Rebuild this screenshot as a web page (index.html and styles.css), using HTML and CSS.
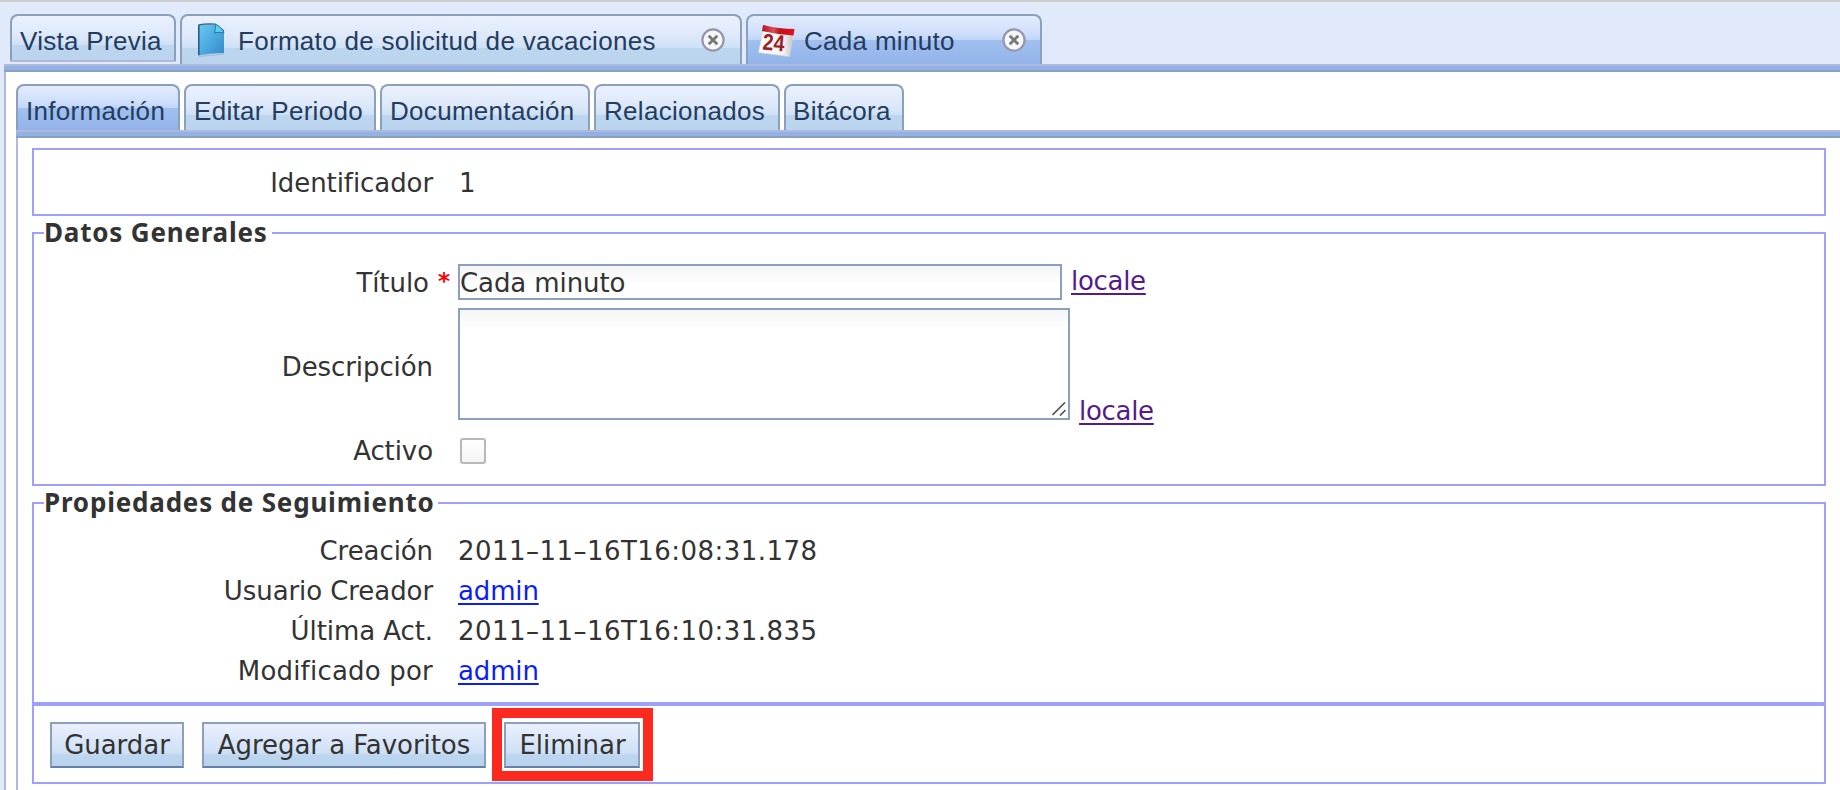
FILE: index.html
```
<!DOCTYPE html>
<html lang="es">
<head>
<meta charset="utf-8">
<title>Cada minuto</title>
<link rel="stylesheet" href="styles.css">
</head>
<body>
<div class="app">
  <nav class="tabs tabs-outer">
    <div class="tab tab-preview"><span class="t-vista">Vista Previa</span></div>
    <div class="tab tab-format">
      <svg class="ico-doc" width="30" height="36" viewBox="0 0 30 36">
        <defs><linearGradient id="doc" x1="0" y1="0" x2="1" y2="1"><stop offset="0" stop-color="#6cc9f4"/><stop offset=".5" stop-color="#4dabe0"/><stop offset="1" stop-color="#3487c6"/></linearGradient></defs>
        <path d="M3 34 L28 31.500 V32.500 L3 35Z" fill="#8fa9bd" opacity=".6"/>
        <path d="M2.500 3 Q10 1.500 18 2 L28 11 V31 Q14 31 3 33.500Z" fill="url(#doc)"/>
        <path d="M2.800 3 V33.300" stroke="#235f8e" stroke-width="1.600"/>
        <path d="M2.500 2.800 Q10 1.500 19 2 L28 9" stroke="#3d5f78" stroke-width="1.200" fill="none"/>
        <path d="M19 2 Q20 6 18.500 11 Q23 9.500 28 11 Q26 5 19 2Z" fill="#58d2ee" stroke="#2576a3" stroke-width="1"/>
      </svg>
      <span class="t-format">Formato de solicitud de vacaciones</span>
      <svg class="ico-close" width="24" height="24" viewBox="0 0 24 24"><circle cx="12" cy="12" r="10.600" fill="#f6f7fb" stroke="#9596ab" stroke-width="2.200"/><path d="M7.700 7.700 16.300 16.300M16.300 7.700 7.700 16.300" stroke="#777" stroke-width="2.800"/></svg>
    </div>
    <div class="tab tab-minute active">
      <svg class="ico-cal" width="38" height="36" viewBox="0 0 38 36">
        <defs><linearGradient id="page" x1="0" y1="0" x2="1" y2="0"><stop offset="0" stop-color="#fff"/><stop offset=".72" stop-color="#f4f2f1"/><stop offset="1" stop-color="#c7c5c6"/></linearGradient>
        <linearGradient id="head" x1="0" y1="0" x2="1" y2="0"><stop offset="0" stop-color="#b80f1b"/><stop offset=".35" stop-color="#d95058"/><stop offset=".55" stop-color="#bd101c"/><stop offset="1" stop-color="#e8101f"/></linearGradient></defs>
        <path d="M6 9 L36 12 L32.500 34.500 L1.500 30.500Z" fill="url(#page)" stroke="#d5d5dc" stroke-width=".7"/>
        <path d="M6 3 Q22 7 37.500 7 L36.500 13.500 Q20 12.500 5 9Z" fill="url(#head)"/>
        <text x="5" y="27.500" class="cal-day" textLength="22" lengthAdjust="spacingAndGlyphs" transform="rotate(5 5 27)">24</text>
      </svg>
      <span class="t-minute">Cada minuto</span>
      <svg class="ico-close" width="24" height="24" viewBox="0 0 24 24"><circle cx="12" cy="12" r="10.600" fill="#f6f7fb" stroke="#9596ab" stroke-width="2.200"/><path d="M7.700 7.700 16.300 16.300M16.300 7.700 7.700 16.300" stroke="#777" stroke-width="2.800"/></svg>
    </div>
  </nav>
  <main class="panel-outer">
    <div class="strip"></div>
    <nav class="tabs tabs-inner">
      <div class="tab w1 active"><span>Información</span></div>
      <div class="tab w2"><span>Editar Periodo</span></div>
      <div class="tab w3"><span>Documentación</span></div>
      <div class="tab w4"><span>Relacionados</span></div>
      <div class="tab w5"><span>Bitácora</span></div>
    </nav>
    <section class="panel-inner">
      <div class="strip"></div>
      <form class="form">
        <fieldset class="box-id">
          <div class="row"><label>Identificador</label><span class="ident">1</span></div>
        </fieldset>
        <fieldset class="box-data">
          <legend class="l-data">Datos Generales</legend>
          <div class="rows">
            <div class="row row-title"><label>Título <em>*</em></label><input class="text-in" type="text" value="Cada minuto"><a class="visited" href="#">locale</a></div>
            <div class="row row-desc"><label>Descripción</label><div class="area"><svg width="14" height="14" viewBox="0 0 14 14"><path d="M.5 13 13 .5M8 13.500 13.500 8" stroke="#555" stroke-width="1.700"/></svg></div><a class="visited low" href="#">locale</a></div>
            <div class="row row-active"><label>Activo</label><span class="check"></span></div>
          </div>
        </fieldset>
        <fieldset class="box-track">
          <legend class="l-track">Propiedades de Seguimiento</legend>
          <div class="track">
            <div class="row"><label>Creación</label><span class="date">2011–11–16T16:08:31.178</span></div>
            <div class="row"><label>Usuario Creador</label><a href="#">admin</a></div>
            <div class="row"><label>Última Act.</label><span class="date">2011–11–16T16:10:31.835</span></div>
            <div class="row"><label class="modified">Modificado por</label><a href="#">admin</a></div>
          </div>
        </fieldset>
        <fieldset class="box-actions">
          <div class="actions">
            <button type="button" class="b-save">Guardar</button>
            <button type="button" class="b-fav">Agregar a Favoritos</button>
            <div class="marked"><button type="button" class="b-del">Eliminar</button><span class="mark"></span></div>
          </div>
        </fieldset>
      </form>
    </section>
  </main>
</div>
</body>
</html>
```
FILE: styles.css
```
* { box-sizing: border-box; }
body {
  margin: 0;
  height: 790px;
  overflow: hidden;
  background: #e1eafb;
  color: #333;
  font: 26px/40px "DejaVu Sans", sans-serif;
}
.app { border-top: 2px solid #ccc; height: 790px; display: flex; flex-direction: column; }
.tabs { display: flex; gap: 4px; font: 26px/40px "Liberation Sans", Arial, sans-serif; letter-spacing: .3px; color: #243c5f; white-space: nowrap; }
.tabs-outer { height: 62px; padding: 12px 0 0 10px; align-items: flex-start; }
.tab {
  display: flex;
  align-items: center;
  height: 100%;
  border: 2px solid #8ba0bd;
  border-bottom: 0;
  border-radius: 8px 8px 0 0;
  background: linear-gradient(#ebf1fd 0%, #dce8f9 45%, #cfe1f6 66%, #bdd6ef 67%, #bbd4ee 100%);
}
.tab.active { background: linear-gradient(#e3ecfd 0%, #cfdffb 35%, #c3d6f8 49%, #a0c0f0 50%, #93b4ea 100%); }
.tab-preview { width: 166px; height: 48px; padding: 5px 0 0 8px; border-bottom: 2px solid #b1b8df; border-radius: 8px 8px 2px 2px; }
.tab-format { width: 562px; padding-left: 14px; }
.tab-minute { width: 296px; padding-left: 9px; }
.tab-format .t-format { margin-left: 12px; width: 463px; padding-top: 1px; }
.tab-minute .t-minute { margin-left: 9px; width: 198px; padding-top: 1px; }
.tabs-outer svg { flex: none; }
.cal-day { font: bold 23px "Liberation Sans", Arial, sans-serif; letter-spacing: 0; fill: #9d1e26; }
.panel-outer { flex: 1; margin-left: 4px; border-left: 2px solid #b1b8df; background: #fff; }
.strip { height: 8px; margin-left: -2px; border-top: 2px solid #b1b8df; border-bottom: 2px solid #8ba0bd; background: #93b2e4; }
.tabs-inner { height: 58px; padding: 12px 0 0 10px; }
.tabs-inner .tab { padding: 5px 0 0 8px; }
.tabs-inner .w5 { padding-left: 7px; }
.w1 { width: 164px; }
.w2 { width: 192px; }
.w3 { width: 210px; }
.w4 { width: 186px; }
.w5 { width: 120px; }
.panel-inner { height: 660px; margin-left: 10px; border-left: 2px solid #b1b8df; }
.form { padding: 10px 14px 0; }
fieldset { margin: 0; padding: 0; min-width: 0; border: 2px solid #9f9fff; }
.box-id { height: 68px; padding-top: 13px; }
.ident { margin-left: 1px; }
.box-data { margin-top: 1px; height: 269px; }
.box-track { margin-top: 1px; height: 217px; }
.box-actions { height: 80px; }
legend { height: 32px; margin-left: 10px; padding: 0; font: bold 26px/30px "Noto Sans", sans-serif; letter-spacing: .8px; white-space: nowrap; }
.l-data { width: 228px; }
.l-track { width: 394px; }
.rows { padding-top: 15px; display: flex; flex-direction: column; gap: 8px; }
.track { padding-top: 12px; }
.row { display: flex; align-items: center; height: 40px; }
.row label { width: 399px; margin-right: 25px; text-align: right; letter-spacing: -.08px; white-space: nowrap; }
.row .modified { letter-spacing: .2px; }
.date { letter-spacing: .46px; }
.row em { color: #f00; font-style: normal; font-weight: bold; font-size: 23px; line-height: 20px; vertical-align: 3px; }
.row a { color: #0a1ef5; letter-spacing: -.15px; text-decoration-thickness: 2px; text-underline-offset: 3px; }
.row a.visited { color: #551a8b; margin-left: 9px; letter-spacing: -.3px; }
.row-title { height: 36px; }
.row-title label { width: 416px; margin-right: 8px; padding-top: 1px; }
.row-title em { margin-left: 1px; }
.row-title a { line-height: 34px; align-self: flex-start; }
.text-in {
  width: 604px;
  height: 36px;
  margin: 0;
  padding: 1px 0 0;
  border: 2px solid #8ba0bd;
  color: #333;
  font: 26px/31px "DejaVu Sans", sans-serif;
  letter-spacing: -.1px;
  background: linear-gradient(#f5f5f5, #fff 20px);
}
.row-desc { height: 112px; }
.row-desc label { padding-top: 5px; }
.area {
  width: 612px;
  height: 112px;
  padding: 0 2px 2px 0;
  display: flex;
  align-items: flex-end;
  justify-content: flex-end;
  border: 2px solid #8ba0bd;
  background: linear-gradient(#f5f5f5, #fff 20px);
}
.low { align-self: flex-end; line-height: 18px; }
.row-active { height: 46px; }
.check { width: 26px; height: 26px; margin-left: 2px; border: 2px solid #b8b8b8; border-radius: 3px; background: linear-gradient(#fff, #f4f4f4); }
.actions { display: flex; gap: 18px; padding: 16px 0 0 16px; }
button {
  display: block;
  height: 46px;
  padding: 0;
  border: 2px solid #8ba0bd;
  border-bottom-color: #6880a4;
  color: #333;
  font: 26px/42px "DejaVu Sans", sans-serif;
  white-space: nowrap;
  letter-spacing: -.05px;
  background: linear-gradient(#eaf0fd, #cfe0f6 68%, #bdd6ef 74%, #b9d3ed);
}
.b-save { width: 134px; }
.b-fav { width: 284px; }
.b-del { width: 136px; padding-left: 1px; }
.marked { position: relative; }
.mark { position: absolute; top: -14px; left: -12px; width: 161px; height: 73px; border: 10px solid #fc2a1e; }
```
